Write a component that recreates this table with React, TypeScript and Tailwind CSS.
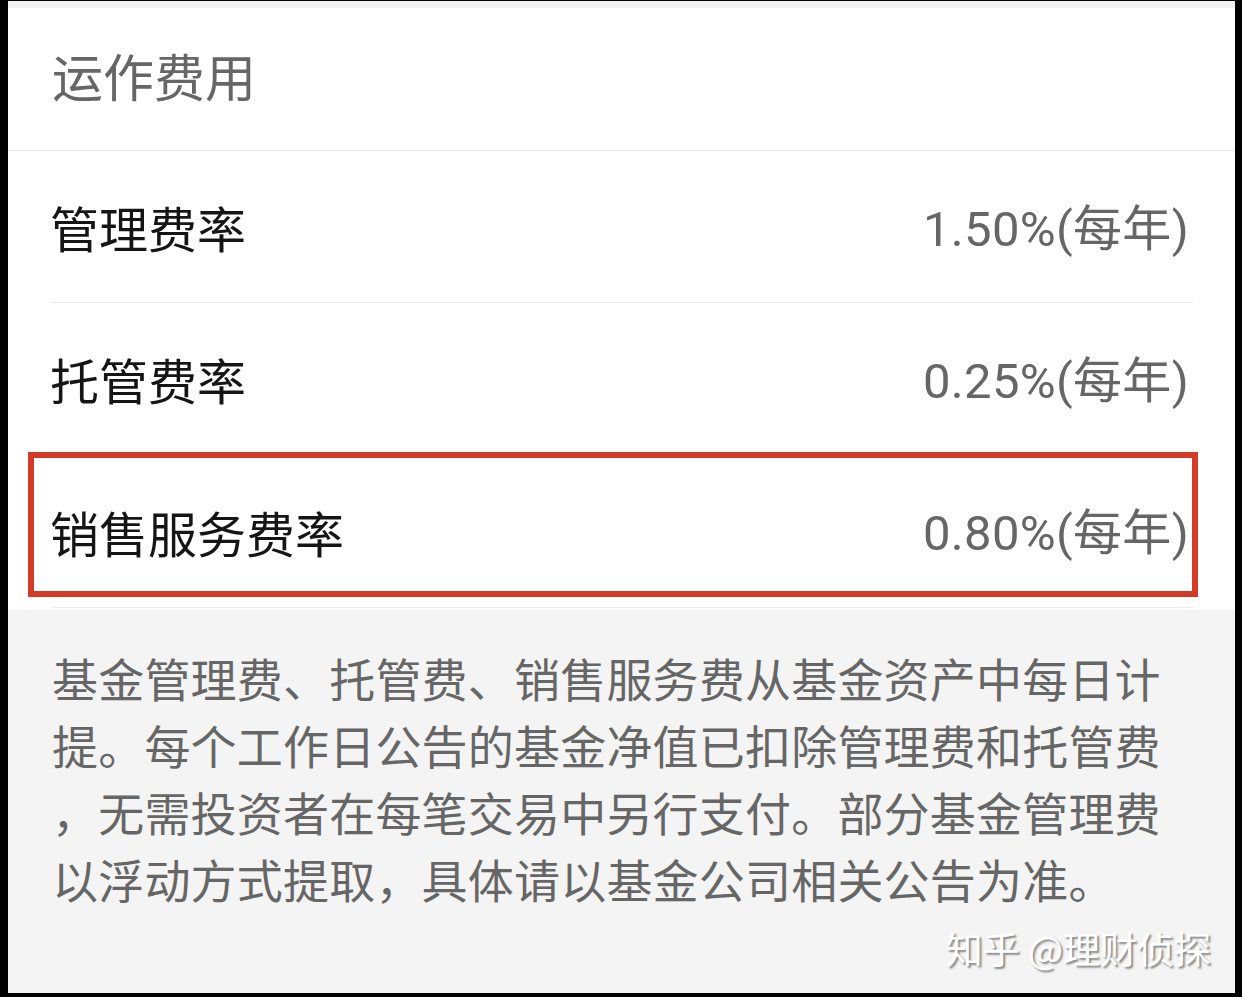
const cjk = { fontFamily: '"Noto Sans CJK SC", "Noto Sans", sans-serif' };
const num = { fontFamily: 'Roboto, "Noto Sans CJK SC", sans-serif' };

const rows = [
  { label: '管理费率', value: '1.50%(每年)' },
  { label: '托管费率', value: '0.25%(每年)' },
  { label: '销售服务费率', value: '0.80%(每年)', marked: true },
];

const notes = [
  '基金管理费、托管费、销售服务费从基金资产中每日计',
  '提。每个工作日公告的基金净值已扣除管理费和托管费',
  '，无需投资者在每笔交易中另行支付。部分基金管理费',
  '以浮动方式提取，具体请以基金公司相关公告为准。',
];

function FeeRow({ label, value, marked, last }: { label: string; value: string; marked?: boolean; last?: boolean }) {
  return (
    <div className={`relative flex h-[152px] items-center justify-between ${last ? '' : 'border-b border-[#ebebeb]'}`}>
      <span className="text-[49px] leading-none text-[#151515]">{label}</span>
      <span className="mt-[5px] pr-[4px] text-[49px] leading-none tracking-[0.3px] text-[#666666]" style={num}>{value}</span>
      {marked && (
        <div className="pointer-events-none absolute -left-[22px] -right-[5px] -top-[3px] bottom-[10px] border-[6px] border-[#d23c27]" />
      )}
    </div>
  );
}

export default function App() {
  return (
    <div className="h-[997px] w-[1242px] bg-black pb-[4px] pl-[8px] pr-[7px] pt-[1px]" style={cjk}>
      <div className="flex h-full flex-col overflow-hidden">
        <div className="h-[7px] bg-[#f2f2f2]" />

        {/* header */}
        <div className="flex h-[143px] items-center border-b border-[#e8e8e8] bg-white pl-[44px]">
          <span className="-mt-[8px] text-[51px] leading-none text-[#666666]">运作费用</span>
        </div>

        {/* fee rows */}
        <div className="bg-white px-[42px]">
          {rows.map((r, i) => (
            <FeeRow key={r.label} {...r} last={i === rows.length - 1} />
          ))}
          <div className="h-[1px] bg-[#ececec]" />
        </div>
        <div className="h-[2px] bg-white" />

        {/* notes */}
        <div className="relative flex-1 bg-[#f4f4f4] pl-[44px] pt-[34px]">
          {notes.map((line) => (
            <div key={line} className="whitespace-nowrap text-[46px] leading-[67px] tracking-[0.2px] text-[#666666]">
              {line}
            </div>
          ))}
          <div className="absolute bottom-[26px] right-[24px] text-[37px] leading-none text-white [text-shadow:2px_2px_2px_rgba(0,0,0,0.45)]">
            知乎 @理财侦探
          </div>
        </div>
      </div>
    </div>
  );
}
